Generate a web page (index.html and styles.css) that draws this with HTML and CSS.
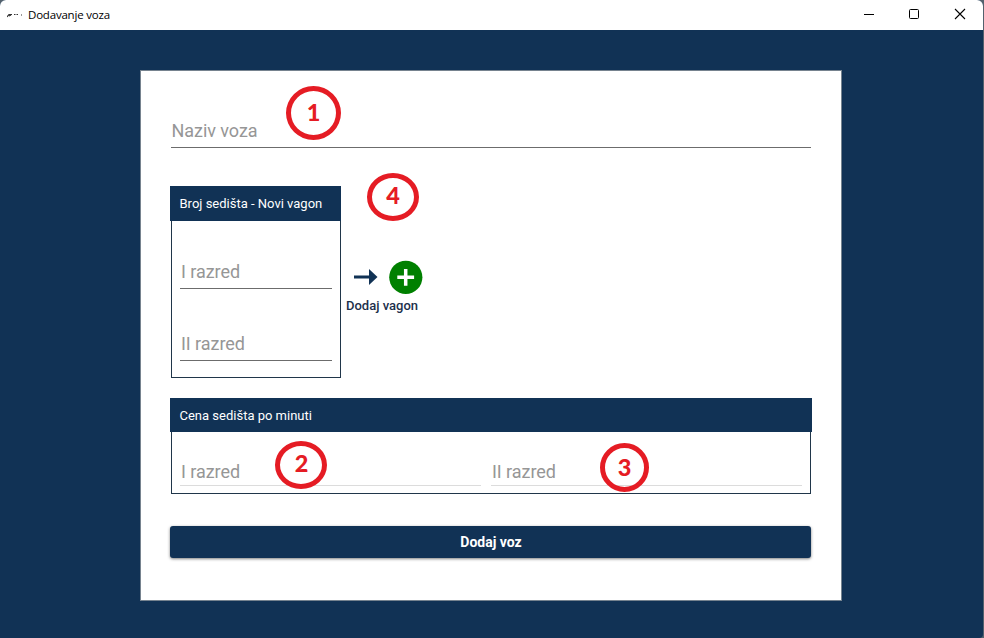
FILE: index.html
```html
<!DOCTYPE html>
<html lang="sr">
<head>
<meta charset="utf-8">
<title>Dodavanje voza</title>
<link rel="stylesheet" href="styles.css">
</head>
<body>
<div class="window">
  <header class="titlebar">
    <svg class="app-icon" width="16" height="8" viewBox="0 0 16 8"><path d="M0 6L2 3.5H5M2 5L4 4M7 3.5H8.500M9.500 3.500H11M14 4H15" fill="none" stroke="#333" stroke-width="1.200"/></svg>
    <span class="title">Dodavanje voza</span>
    <svg class="controls" width="102" height="12" viewBox="0 0 102 12" fill="none" stroke="#000"><path d="M0 6.500H10"/><rect x="45.500" y="1.500" width="9" height="9" rx="1"/><path d="M91 1L101 11M101 1L91 11" stroke-width="1.100"/></svg>
  </header>
  <main class="content">
    <form class="card">
      <div class="field name-field"><label>Naziv voza</label></div>
      <div class="wagon-row">
        <section class="panel wagon">
          <h2 class="panel-head">Broj sedišta - Novi vagon</h2>
          <div class="wagon-body">
            <div class="field first"><label>I razred</label></div>
            <div class="field second"><label>II razred</label></div>
          </div>
        </section>
        <div class="add">
          <div class="add-icons">
            <svg width="24" height="18" viewBox="0 0 24 18"><path d="M0 7.500H15V1L23.500 9L15 17V10.500H0Z" fill="#113255"/></svg>
            <svg width="34" height="34" viewBox="0 0 34 34"><circle cx="16.800" cy="17.300" r="16.600" fill="#008000"/><path d="M8.300 17.300H25.100M16.700 8.900V25.700" stroke="#fff" stroke-width="3.500"/></svg>
          </div>
          <span class="add-label">Dodaj vagon</span>
        </div>
      </div>
      <section class="panel price">
        <h2 class="panel-head">Cena sedišta po minuti</h2>
        <div class="price-body">
          <div class="field light"><label>I razred</label></div>
          <div class="field light"><label>II razred</label></div>
        </div>
      </section>
      <button class="submit" type="button">Dodaj voz</button>
    </form>
  </main>
  <div class="mark mark-1">1</div>
  <div class="mark mark-2">2</div>
  <div class="mark mark-3">3</div>
  <div class="mark mark-4">4</div>
</div>
</body>
</html>
```
FILE: styles.css
```css
* { box-sizing: border-box; }
body { margin: 0; background: #53616d; font-family: Roboto, sans-serif; overflow: hidden; }
.window { position: relative; width: 983px; height: 638px; background: #113255; border-radius: 6px 6px 4px 0; overflow: hidden; }
.titlebar { height: 30px; background: #fff; display: flex; align-items: center; padding: 0 17px 0 7px; }
.app-icon { flex: none; margin-right: 5px; }
.title { font: 11.5px/16px "Open Sans", sans-serif; letter-spacing: -0.2px; color: #000; }
.controls { margin-left: auto; position: relative; top: -1px; }
.content { padding: 40px 0 0 140px; }
.card { width: 702px; height: 531px; background: #fff; border: 1px solid #76838f; padding: 44px 30px 0 29px; }
.field { border-bottom: 1px solid #6c6c6c; color: #969696; font-size: 18px; line-height: 21px; letter-spacing: -0.05px; padding-left: 1px; display: flex; align-items: flex-end; }
.name-field { height: 33px; margin-left: 1px; padding-left: 0.5px; padding-bottom: 6px; }
.wagon-row { display: flex; margin-top: 38px; }
.panel-head { margin: 0; background: #113255; color: #fff; font-size: 13px; font-weight: 400; line-height: 35px; padding-left: 9.5px; }
.wagon { width: 171px; }
.wagon-body { height: 157px; margin-left: 1px; border: 1px solid #20364a; border-top: 0; padding: 0 8px; }
.first { height: 68px; padding-bottom: 6px; }
.second { height: 72px; padding-bottom: 6px; }
.add { margin: 74px 0 0 5px; }
.add-icons { display: flex; align-items: center; gap: 11px; padding-left: 8px; }
.add-label { display: block; margin-top: 4px; color: #1c304b; font-size: 13px; font-weight: 500; line-height: 15px; }
.price { width: 642px; margin-top: 20px; }
.price .panel-head { line-height: 33px; padding-top: 1px; }
.price-body { height: 62px; margin: 0 1px; border: 1px solid #20364a; border-top: 0; padding: 0 8px; display: grid; grid-template-columns: 301px 311px; gap: 10px; }
.light { height: 54px; border-color: #dcdcdc; padding-bottom: 3px; }
.submit { display: block; width: 641px; height: 32px; margin-top: 32px; padding: 0 0 0 1px; border: 0; border-radius: 3px; background: #113255; color: #fff; font: 700 14px/32px Roboto, sans-serif; box-shadow: 0 1px 3px rgba(0, 0, 0, .5); }
.mark { position: absolute; border: 5px solid #e51c24; border-radius: 50%; color: #e51c24; display: flex; justify-content: center; font: 900 23.5px/24px Lato, sans-serif; }
.mark-1 { left: 286px; top: 86px; width: 55px; height: 54px; padding-top: 9px; }
.mark-2 { left: 275px; top: 441px; width: 52px; height: 48px; padding: 5px 0 0 1px; }
.mark-3 { left: 600px; top: 443px; width: 49px; height: 49px; padding-top: 7px; }
.mark-4 { left: 367px; top: 173px; width: 52px; height: 48px; padding-top: 5px; }
```
